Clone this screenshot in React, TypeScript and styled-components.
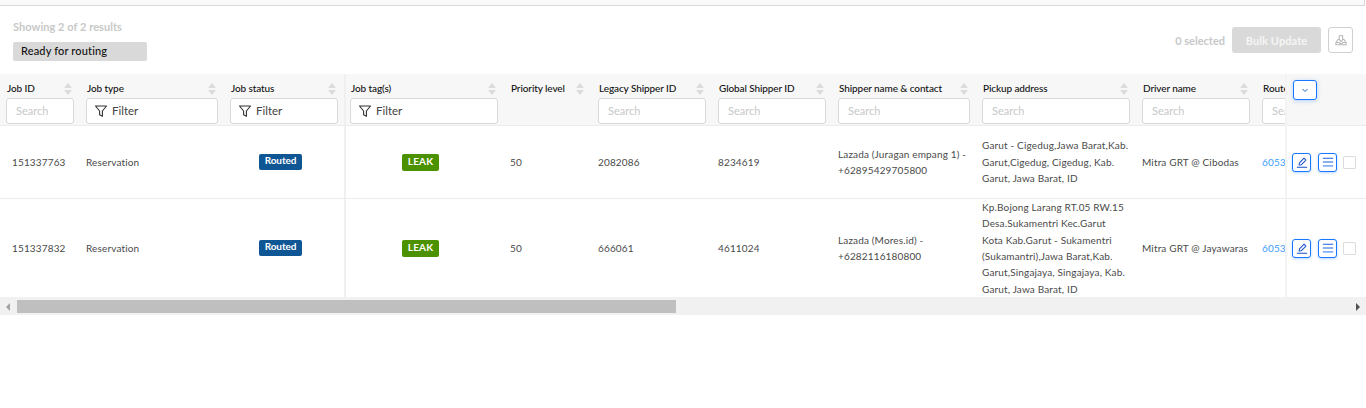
import * as React from 'react';
import styled, { createGlobalStyle } from 'styled-components';

interface Column {
	title: string;
	width: number;
	filter?: 'search' | 'select';
	sortable?: boolean;
	frozen?: boolean;
}

interface Job {
	id: string;
	priority: string;
	legacy: string;
	global: string;
	shipper: string[];
	address: string[];
	driver: string;
	route: string;
	height: number;
}

const columns: Column[] = [
	{ title: 'Job ID', width: 80, filter: 'search', sortable: true },
	{ title: 'Job type', width: 144, filter: 'select', sortable: true },
	{ title: 'Job status', width: 120, filter: 'select', sortable: true, frozen: true },
	{ title: 'Job tag(s)', width: 160, filter: 'select', sortable: true },
	{ title: 'Priority level', width: 88, sortable: true },
	{ title: 'Legacy Shipper ID', width: 120, filter: 'search', sortable: true },
	{ title: 'Global Shipper ID', width: 120, filter: 'search', sortable: true },
	{ title: 'Shipper name & contact', width: 144, filter: 'search', sortable: true },
	{ title: 'Pickup address', width: 160, filter: 'search', sortable: true },
	{ title: 'Driver name', width: 120, filter: 'search', sortable: true },
	{ title: 'Route ID', width: 120, filter: 'search', sortable: true },
];

const jobs: Job[] = [
	{
		id: '151337763',
		priority: '50',
		legacy: '2082086',
		global: '8234619',
		shipper: ['Lazada (Juragan empang 1) -', '+62895429705800'],
		address: ['Garut - Cigedug,Jawa Barat,Kab.', 'Garut,Cigedug, Cigedug, Kab.', 'Garut, Jawa Barat, ID'],
		driver: 'Mitra GRT @ Cibodas',
		route: '6053',
		height: 73,
	},
	{
		id: '151337832',
		priority: '50',
		legacy: '666061',
		global: '4611024',
		shipper: ['Lazada (Mores.id) -', '+6282116180800'],
		address: [
			'Kp.Bojong Larang RT.05 RW.15',
			'Desa.Sukamentri Kec.Garut',
			'Kota Kab.Garut - Sukamentri',
			'(Sukamantri),Jawa Barat,Kab.',
			'Garut,Singajaya, Singajaya, Kab.',
			'Garut, Jawa Barat, ID',
		],
		driver: 'Mitra GRT @ Jayawaras',
		route: '6053',
		height: 98,
	},
];

const App = () => {
	return (
		<Root>
			<GlobalStyle />
			<TopEdge />
			<Toolbar>
				<div>
					<ResultCount>Showing 2 of 2 results</ResultCount>
					<StatusPill>Ready for routing</StatusPill>
				</div>
				<ToolbarActions>
					<SelectedCount>0 selected</SelectedCount>
					<BulkButton>Bulk Update</BulkButton>
					<DownloadButton aria-label="Download">
						<svg width="12" height="12" viewBox="0 0 14 14" fill="none" stroke="#b5b5b5" strokeWidth="1.2">
							<path d="M5 6.5H3.5L1 10v2.5h12V10L10.5 6.5H9M5 6.5V2h4v4.5M5 6.5l2 2.5 2-2.5M1 10h4c0 1 1 1.3 2 1.3S9 11 9 10h4" />
						</svg>
					</DownloadButton>
				</ToolbarActions>
			</Toolbar>
			<TableArea>
				<ScrollPane>
					<HeaderRow>
						{columns.map(col => (
							<HeaderCell key={col.title} $width={col.width} $frozen={col.frozen}>
								<HeaderTitle>
									<span>{col.title}</span>
									{col.sortable && (
										<SortArrows>
											<i />
											<i />
										</SortArrows>
									)}
								</HeaderTitle>
								{col.filter === 'search' && <SearchInput placeholder="Search" readOnly />}
								{col.filter === 'select' && (
									<FilterBox>
										<svg width="14" height="14" viewBox="0 0 14 14" fill="none" stroke="#333" strokeWidth="1.1">
											<path d="M1.5 2h11L8.4 7v5.2L5.6 10.8V7z" strokeLinejoin="round" />
										</svg>
										Filter
									</FilterBox>
								)}
							</HeaderCell>
						))}
					</HeaderRow>
					{jobs.map(job => (
						<Row key={job.id} $height={job.height}>
							<Cell $width={80}>{job.id}</Cell>
							<Cell $width={144}>Reservation</Cell>
							<Cell $width={120} $frozen $center>
								<RoutedTag>Routed</RoutedTag>
							</Cell>
							<Cell $width={160} $center>
								<LeakTag>LEAK</LeakTag>
							</Cell>
							<Cell $width={88}>{job.priority}</Cell>
							<Cell $width={120}>{job.legacy}</Cell>
							<Cell $width={120}>{job.global}</Cell>
							<Cell $width={144}>
								<div>
									{job.shipper.map(line => (
										<TextLine key={line}>{line}</TextLine>
									))}
								</div>
							</Cell>
							<Cell $width={160}>
								<div>
									{job.address.map(line => (
										<TextLine key={line}>{line}</TextLine>
									))}
								</div>
							</Cell>
							<Cell $width={120}>{job.driver}</Cell>
							<Cell $width={120}>
								<RouteLink>{job.route}</RouteLink>
							</Cell>
						</Row>
					))}
				</ScrollPane>
				<ActionPane>
					<ActionHeader>
						<ColumnToggle aria-label="Columns">
							<svg width="8" height="8" viewBox="0 0 8 8" fill="none" stroke="#1f5fbf" strokeWidth="1">
								<path d="M1.5 3l2.5 2.5L6.5 3" />
							</svg>
						</ColumnToggle>
					</ActionHeader>
					{jobs.map(job => (
						<ActionRow key={job.id} $height={job.height}>
							<IconButton aria-label="Edit">
								<svg width="12" height="12" viewBox="0 0 14 14" fill="none" stroke="#1552c8" strokeWidth="1.2">
									<path d="M1 13h12M3.6 10.6l.5-2.7L9.4 2.6l2.2 2.2-5.3 5.3z" strokeLinejoin="round" />
								</svg>
							</IconButton>
							<IconButton aria-label="Details">
								<svg width="12" height="12" viewBox="0 0 14 14" fill="none" stroke="#1a62d6" strokeWidth="1.2">
									<path d="M1 2.5h12M1 7h12" />
									<path d="M1 11.5h12" stroke="#7fb0f5" strokeWidth="2" />
								</svg>
							</IconButton>
							<Checkbox />
						</ActionRow>
					))}
				</ActionPane>
			</TableArea>
			<Scrollbar>
				<ScrollArrow $left />
				<ScrollTrack>
					<ScrollThumb />
				</ScrollTrack>
				<ScrollArrow />
			</Scrollbar>
		</Root>
	);
};

export default App;

const GlobalStyle = createGlobalStyle`
	html, body {
		margin: 0;
		padding: 0;
		background: #fff;
	}
	* {
		box-sizing: border-box;
	}
`;

const Root = styled.div`
	width: 1366px;
	height: 408px;
	overflow: hidden;
	font-family: Lato, 'Liberation Sans', sans-serif;
	font-size: 10px;
	color: #4a4a4a;
`;

const TopEdge = styled.div`
	height: 6px;
	background: #fafafa;
	border-bottom: 1px solid #d9d9d9;
	border-right: 1px solid #d9d9d9;
	margin-right: 1px;
`;

const Toolbar = styled.div`
	display: flex;
	justify-content: space-between;
	height: 68px;
	padding: 14px 13px 0;
`;

const ResultCount = styled.div`
	font-size: 11px;
	line-height: 14px;
	font-weight: 700;
	letter-spacing: 0.05px;
	color: #c8c8c8;
`;

const StatusPill = styled.div`
	width: 134px;
	height: 19px;
	margin-top: 8px;
	padding-left: 8px;
	border-radius: 2px;
	background: #d9d9d9;
	color: #111;
	font-size: 11px;
	font-weight: 500;
	letter-spacing: 0.15px;
	line-height: 18px;
`;

const ToolbarActions = styled.div`
	display: flex;
	align-items: center;
	height: 26px;
	margin-top: 7px;
`;

const SelectedCount = styled.span`
	margin-right: 7px;
	font-size: 11px;
	font-weight: 700;
	color: #c8c8c8;
`;

const BulkButton = styled.button`
	width: 89px;
	height: 26px;
	margin-right: 7px;
	padding: 0;
	border: 0;
	border-radius: 3px;
	background: #d9d9d9;
	color: #f5f5f5;
	font-family: inherit;
	font-size: 11px;
	font-weight: 700;
	letter-spacing: 0.1px;
`;

const DownloadButton = styled.button`
	display: flex;
	align-items: center;
	justify-content: center;
	width: 25px;
	height: 26px;
	padding: 0;
	border: 1px solid #d0d0d0;
	border-radius: 3px;
	background: #fff;
`;

const TableArea = styled.div`
	display: flex;
	height: 223px;
`;

const ScrollPane = styled.div`
	width: 1285px;
	overflow: hidden;
`;

const HeaderRow = styled.div`
	display: flex;
	width: max-content;
	height: 52px;
	background: #f7f7f7;
	border-bottom: 1px solid #ececec;
`;

const HeaderCell = styled.div<{ $width: number; $frozen?: boolean }>`
	width: ${p => p.$width}px;
	flex: none;
	padding: 6px 6px 0;
	${p => p.$frozen && 'box-shadow: 2px 0 0 #f0f0f0;'}
`;

const HeaderTitle = styled.div`
	display: flex;
	align-items: center;
	justify-content: space-between;
	height: 17px;
	padding: 0 2px 2px 1px;
	margin-bottom: 1px;
	color: #111;
	font-size: 10px;
	font-weight: 500;
	letter-spacing: -0.1px;
	white-space: nowrap;
`;

const SortArrows = styled.span`
	display: flex;
	flex-direction: column;
	gap: 2px;
	margin-top: 2px;
	i {
		display: block;
		width: 0;
		height: 0;
		border-left: 4px solid transparent;
		border-right: 4px solid transparent;
		border-bottom: 5px solid #dcdcdc;
	}
	i:last-child {
		border-bottom: 0;
		border-top: 5px solid #dcdcdc;
	}
`;

const SearchInput = styled.input`
	display: block;
	width: 100%;
	height: 26px;
	padding: 0 9px 1px;
	border: 1px solid #d9d9d9;
	border-radius: 3px;
	background: #fff;
	font-family: inherit;
	font-size: 11px;
	outline: 0;
	&::placeholder {
		color: #c8c8c8;
	}
`;

const FilterBox = styled.div`
	display: flex;
	align-items: center;
	gap: 4px;
	height: 26px;
	padding: 0 7px 1px;
	border: 1px solid #d9d9d9;
	border-radius: 3px;
	background: #fff;
	color: #444;
	font-size: 11.5px;
`;

const Row = styled.div<{ $height: number }>`
	display: flex;
	width: max-content;
	height: ${p => p.$height}px;
	overflow: hidden;
	border-bottom: 1px solid #ececec;
	&:last-child {
		border-bottom: 0;
	}
`;

const Cell = styled.div<{ $width: number; $frozen?: boolean; $center?: boolean }>`
	display: flex;
	align-items: center;
	justify-content: ${p => (p.$center ? 'center' : 'flex-start')};
	width: ${p => p.$width}px;
	flex: none;
	padding: ${p => (p.$center ? '0 13px 0 6px' : '0 6px')};
	white-space: nowrap;
	letter-spacing: 0.15px;
	${p => p.$frozen && 'box-shadow: 2px 0 0 #f0f0f0;'}
	&:first-child {
		padding-left: 12px;
	}
`;

const TextLine = styled.div`
	line-height: 16.4px;
`;

const RoutedTag = styled.span`
	display: block;
	height: 16px;
	padding: 0 5.5px;
	border-radius: 2px;
	background: #0f5694;
	color: #fff;
	font-size: 10px;
	font-weight: 700;
	letter-spacing: -0.1px;
	line-height: 13px;
`;

const LeakTag = styled.span`
	display: block;
	height: 17px;
	padding: 0 5.5px;
	border-radius: 2px;
	background: #4c9100;
	color: #fff;
	font-size: 10px;
	font-weight: 700;
	line-height: 15px;
`;

const RouteLink = styled.span`
	color: #3d9dff;
`;

const ActionPane = styled.div`
	width: 81px;
	flex: none;
	border-left: 2px solid #f3f3f3;
`;

const ActionHeader = styled.div`
	height: 52px;
	padding: 6px 0 0 6px;
	background: #f7f7f7;
	border-bottom: 1px solid #ececec;
`;

const ColumnToggle = styled.button`
	display: flex;
	align-items: center;
	justify-content: center;
	width: 24px;
	height: 20px;
	padding: 0;
	border: 1px solid #1677ff;
	border-radius: 3px;
	background: #fff;
	box-shadow: 0 1px 4px rgba(22, 119, 255, 0.3);
`;

const ActionRow = styled.div<{ $height: number }>`
	display: flex;
	align-items: center;
	gap: 7px;
	height: ${p => p.$height}px;
	padding: 0 0 0 5px;
	border-bottom: 1px solid #ececec;
	&:last-child {
		border-bottom: 0;
	}
`;

const IconButton = styled.button`
	display: flex;
	align-items: center;
	justify-content: center;
	width: 19px;
	height: 19px;
	padding: 0;
	border: 1px solid #1677ff;
	border-radius: 3px;
	background: #fff;
	box-shadow: 0 1px 3px rgba(22, 119, 255, 0.3);
`;

const Checkbox = styled.span`
	display: block;
	width: 13px;
	height: 13px;
	margin-left: -1px;
	border: 1px solid #dcdcdc;
	border-radius: 1px;
	background: #fff;
`;

const Scrollbar = styled.div`
	display: flex;
	align-items: center;
	height: 18px;
	padding-top: 1px;
	background: #f1f1f1;
`;

const ScrollArrow = styled.span<{ $left?: boolean }>`
	display: block;
	flex: none;
	width: 0;
	height: 0;
	margin: 0 6px;
	border-top: 4px solid transparent;
	border-bottom: 4px solid transparent;
	${p => (p.$left ? 'border-right: 4px solid #a3a3a3;' : 'border-left: 4px solid #505050;')}
`;

const ScrollTrack = styled.div`
	flex: 1;
	height: 13px;
	margin-left: 1px;
`;

const ScrollThumb = styled.div`
	width: 659px;
	height: 13px;
	background: #bfbfbf;
`;
